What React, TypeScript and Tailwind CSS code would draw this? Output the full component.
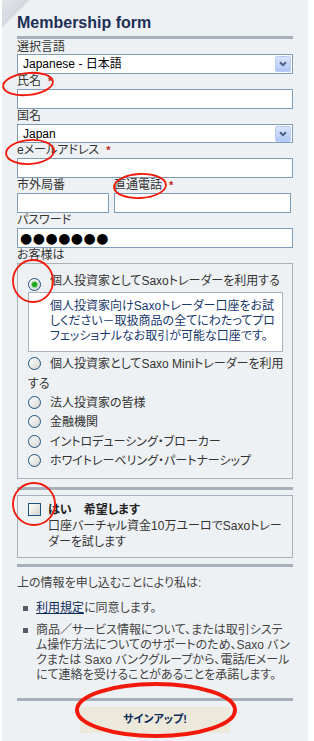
import React from 'react';

const jp = "font-['Liberation_Sans','Noto_Sans_CJK_JP',sans-serif] [font-feature-settings:'palt']";

function Label({ children, req }: { children: React.ReactNode; req?: boolean }) {
  return (
    <div className="h-[15px] whitespace-nowrap text-[12px] leading-[15px] text-[#333]">
      {children}
      {req && <span className="ml-[7px] text-[11px] font-bold text-[#c41e1e]">*</span>}
    </div>
  );
}

function Select({ value, tall }: { value: string; tall?: boolean }) {
  return (
    <div
      className={`flex items-center justify-between border border-[#7f9db9] bg-white pl-[5px] ${tall ? 'h-5' : 'h-[19px]'}`}
    >
      <span className="text-[12px] leading-none text-black">{value}</span>
      <span className="mr-px flex h-[16px] w-[16px] items-center justify-center rounded-[2px] border border-[#b9cbf3] bg-gradient-to-b from-[#dbe5fc] to-[#b0c6f5]">
        <svg width="8" height="6" viewBox="0 0 8 6">
          <path d="M1 1.2 L4 4.2 L7 1.2" fill="none" stroke="#4d6185" strokeWidth="2" />
        </svg>
      </span>
    </div>
  );
}

function Input({ className = '', children }: { className?: string; children?: React.ReactNode }) {
  return <div className={`h-5 border border-[#7f9db9] bg-white ${className}`}>{children}</div>;
}

function Radio({ checked }: { checked?: boolean }) {
  return (
    <span className="mr-[9px] inline-flex h-[13px] w-[13px] items-center justify-center rounded-full border border-[#1c5180] bg-gradient-to-br from-white to-[#d4d4ce] align-[-2px]">
      {checked && <span className="h-[5px] w-[5px] rounded-full bg-[#21a121] ring-1 ring-[#8fd88f]" />}
    </span>
  );
}

function Rule({ className = '' }: { className?: string }) {
  return <div className={`h-[3px] bg-[#a8b0bb] ${className}`} />;
}

export default function App() {
  return (
    <div className={`relative h-[741px] w-[314px] overflow-hidden bg-white ${jp}`}>
      <div className="ml-[2px] w-[306px] bg-[linear-gradient(135deg,#e2e5ea_0px,#d4d9e0_19px,#eef1f4_20px)] px-[15px] pb-[10px] pt-[13px]">
        <h1 className="h-[20px] font-['Liberation_Sans',sans-serif] text-[16px] font-bold leading-[20px] text-[#1b2f55]">
          Membership form
        </h1>
        <Rule className="mt-[3px]" />

        <div className="mt-px">
          <div className="h-[14px] text-[12px] leading-[14px] text-[#333]">選択言語</div>
          <Select value="Japanese - 日本語" tall />
          <Label req>氏名</Label>
          <Input />
          <Label>国名</Label>
          <Select value="Japan" />
          <Label req>eメールアドレス</Label>
          <Input />
          <div className="flex gap-[5px]">
            <div className="w-[92px]">
              <Label>市外局番</Label>
              <Input />
            </div>
            <div className="w-[177px]">
              <Label req>直通電話</Label>
              <Input />
            </div>
          </div>
          <Label>パスワード</Label>
          <Input className="flex items-center pl-[2px]">
            <span className="font-['DejaVu_Sans',sans-serif] text-[14px] leading-none tracking-[0.5px] text-black">●●●●●●●</span>
          </Input>
          <Label>お客様は</Label>
        </div>

        <div className="border border-[#a9b1bb] pb-[6px] pl-[10px] pr-[9px] pt-[8px] text-[12px] leading-[19.5px] text-[#333]">
          <div className="whitespace-nowrap">
            <Radio checked />
            個人投資家としてSaxoトレーダーを利用する
          </div>
          <div className="border border-[#a9b1bb] bg-white pb-[7px] pl-[21px] pt-[6px] text-[12px] leading-[15px] text-[#17386b]">
            個人投資家向けSaxoトレーダー口座をお試
            <br />
            しください－取扱商品の全てにわたってプロ
            <br />
            フェッショナルなお取引が可能な口座です。
          </div>
          <div className="mt-[2px] whitespace-nowrap leading-[20px]">
            <Radio />
            個人投資家としてSaxo Miniトレーダーを利用
            <br />
            する
          </div>
          <div className="whitespace-nowrap">
            <Radio />
            法人投資家の皆様
          </div>
          <div className="whitespace-nowrap">
            <Radio />
            金融機関
          </div>
          <div className="whitespace-nowrap">
            <Radio />
            イントロデューシング・ブローカー
          </div>
          <div className="whitespace-nowrap">
            <Radio />
            ホワイトレーベリング・パートナーシップ
          </div>
        </div>

        <Rule className="mt-[8px]" />

        <div className="mt-[5px] flex gap-[7px] border border-[#a9b1bb] pb-[7px] pl-[10px] pt-[6px] text-[12px] leading-[16px] text-[#333]">
          <span className="mt-px h-[13px] w-[13px] shrink-0 border border-[#1c5180] bg-gradient-to-br from-white to-[#d4d4ce]" />
          <div className="whitespace-nowrap">
            <div className="font-bold text-[#222]">はい　希望します</div>
            <div>
              口座バーチャル資金10万ユーロでSaxoトレー
              <br />
              ダーを試します
            </div>
          </div>
        </div>

        <Rule className="mt-[6px]" />

        <p className="mt-[9px] text-[12px] leading-[15px] text-[#444]">上の情報を申し込むことにより私は:</p>

        <ul className="mt-[10px] space-y-[7px] text-[12px] leading-[15px] text-[#444]">
          <li className="flex items-start">
            <span className="ml-[6px] mr-[8px] mt-[5px] h-[5px] w-[5px] shrink-0 bg-[#555b66]" />
            <span>
              <a href="#" className="text-[#0f2d5c] underline">利用規定</a>に同意します。
            </span>
          </li>
          <li className="flex items-start">
            <span className="ml-[6px] mr-[8px] mt-[5px] h-[5px] w-[5px] shrink-0 bg-[#555b66]" />
            <span className="whitespace-nowrap">
              商品／サービス情報について、または取引システ
              <br />
              ム操作方法についてのサポートのため、Saxo バン
              <br />
              クまたは Saxo バンクグループから、電話/Eメール
              <br />
              にて連絡を受けることがあることを承諾します。
            </span>
          </li>
        </ul>

        <Rule className="mt-[15px]" />

        <button className="mx-auto mt-[6px] flex h-[26px] w-[150px] items-center justify-center bg-[#ece9da] text-[11px] font-bold text-[#0d2c5c]">
          サインアップ!
        </button>
      </div>

      <svg className="pointer-events-none absolute left-0 top-0" width="314" height="741" viewBox="0 0 314 741">
        <g fill="none" stroke="#f2190a">
          <ellipse cx="28" cy="84" rx="25" ry="11" strokeWidth="1.8" transform="rotate(-6 28 84)" />
          <ellipse cx="30" cy="152" rx="24" ry="12" strokeWidth="1.8" transform="rotate(-4 30 152)" />
          <ellipse cx="140" cy="186" rx="26" ry="12" strokeWidth="1.8" transform="rotate(-3 140 186)" />
          <ellipse cx="33" cy="281" rx="20" ry="21" strokeWidth="1.8" />
          <ellipse cx="34" cy="504" rx="21" ry="21" strokeWidth="1.8" />
          <ellipse cx="156" cy="710" rx="79" ry="26" strokeWidth="4" />
        </g>
      </svg>
    </div>
  );
}
